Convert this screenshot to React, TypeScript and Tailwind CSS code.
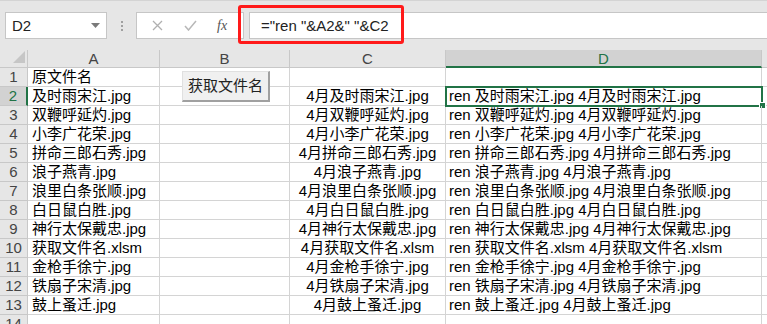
import React from 'react';

const names = [
  '及时雨宋江.jpg',
  '双鞭呼延灼.jpg',
  '小李广花荣.jpg',
  '拼命三郎石秀.jpg',
  '浪子燕青.jpg',
  '浪里白条张顺.jpg',
  '白日鼠白胜.jpg',
  '神行太保戴忠.jpg',
  '获取文件名.xlsm',
  '金枪手徐宁.jpg',
  '铁扇子宋清.jpg',
  '鼓上蚤迁.jpg',
];

const rows = [
  { a: '原文件名', c: '', d: '' },
  ...names.map(n => ({ a: n, c: `4月${n}`, d: `ren ${n} 4月${n}` })),
  { a: '', c: '', d: '' },
];

const font = { fontFamily: '"Liberation Sans", "Noto Sans CJK SC", sans-serif' };

function Toolbar() {
  return (
    <div className="relative flex h-[50px] items-start border-t border-[#d4d4d4] bg-[#e6e6e6] pt-[11px]">
      <div className="ml-[5px] flex h-[27px] w-[102px] items-center justify-between border border-[#c6c6c6] bg-white pl-[6px] pr-[6px]">
        <span className="text-[15px] leading-none text-[#222]">D2</span>
        <svg width="9" height="5" viewBox="0 0 9 5">
          <path d="M0 0h9L4.5 5z" fill="#7a7a7a" />
        </svg>
      </div>
      <div className="ml-[14px] mt-[9px] flex flex-col gap-[2px]">
        <span className="h-[2px] w-[2px] bg-[#a0a0a0]" />
        <span className="h-[2px] w-[2px] bg-[#a0a0a0]" />
        <span className="h-[2px] w-[2px] bg-[#a0a0a0]" />
      </div>
      <div className="ml-[13px] flex h-[27px] w-[108px] items-center border border-[#c6c6c6] bg-white">
        <svg className="ml-[15px]" width="11" height="11" viewBox="0 0 11 11">
          <path d="M1 1l9 9M10 1l-9 9" stroke="#b0b0b0" strokeWidth="1.3" />
        </svg>
        <svg className="ml-[21px]" width="13" height="11" viewBox="0 0 13 11">
          <path d="M1 6l3.5 4L12 1" fill="none" stroke="#b8b8b8" strokeWidth="1.5" />
        </svg>
        <span
          className="ml-[20px] text-[14px] italic leading-none text-[#555]"
          style={{ fontFamily: '"Liberation Serif", serif' }}
        >
          fx
        </span>
      </div>
      <div className="ml-[5px] flex h-[27px] flex-1 items-center border-y border-l border-[#c6c6c6] bg-white pl-[11px]">
        <span className="text-[15px] leading-none text-[#222]">="ren "&amp;A2&amp;" "&amp;C2</span>
      </div>
      <div className="absolute left-[238px] top-[4px] h-[39px] w-[166px] rounded-[3px] border-[3px] border-[#ff1a1a]" />
    </div>
  );
}

export default function App() {
  return (
    <div className="relative h-[324px] w-[767px] overflow-hidden bg-white" style={font}>
      <Toolbar />
      <div className="grid grid-cols-[28px_132px_130px_156px_316px_1fr] text-[15px] leading-[19px] text-black">
        <div className="flex h-[18px] items-end justify-end border-b border-r border-[#c8c8c8] bg-[#e6e6e6] pb-[4px] pr-[2px]">
          <svg width="12" height="12" viewBox="0 0 12 12">
            <path d="M12 0v12H0z" fill="#c6c6c6" />
          </svg>
        </div>
        {['A', 'B', 'C'].map(l => (
          <div key={l} className="flex h-[18px] items-center justify-center border-b border-r border-[#c8c8c8] bg-[#e6e6e6] text-[#444]">
            {l}
          </div>
        ))}
        <div className="flex h-[18px] items-center justify-center border-b-2 border-r border-b-[#217346] border-r-[#c8c8c8] bg-[#d2d2d2] text-[#217346]">
          D
        </div>
        <div className="h-[18px] border-b border-[#c8c8c8] bg-[#e6e6e6]" />

        {rows.map((r, i) => {
          const sel = i === 1;
          return (
            <React.Fragment key={i}>
              <div
                className={
                  sel
                    ? 'flex h-[19px] items-end justify-center border-b border-r-2 border-b-[#c8c8c8] border-r-[#217346] bg-[#d2d2d2] text-[#217346]'
                    : 'flex h-[19px] items-end justify-center border-b border-r border-[#c8c8c8] bg-[#e6e6e6] text-[#444]'
                }
              >
                {i + 1}
              </div>
              <div className="flex h-[19px] items-end whitespace-nowrap border-b border-r border-[#d4d4d4] pl-[4px]">{r.a}</div>
              <div className="h-[19px] border-b border-r border-[#d4d4d4]" />
              <div className="flex h-[19px] items-end justify-center whitespace-nowrap border-b border-r border-[#d4d4d4]">{r.c}</div>
              <div className="relative flex h-[19px] items-end whitespace-nowrap border-b border-r border-[#d4d4d4] pl-[3px]">
                {r.d}
                {sel && (
                  <>
                    <div className="absolute -left-[1px] -top-[1px] bottom-[-2px] right-[-2px] border-2 border-[#217346]" />
                    <div className="absolute bottom-[-4px] right-[-5px] h-[7px] w-[7px] border border-white bg-[#217346]" />
                  </>
                )}
              </div>
              <div className="h-[19px] border-b border-[#d4d4d4]" />
            </React.Fragment>
          );
        })}
      </div>
      <button className="absolute left-[182px] top-[71px] flex h-[31px] w-[88px] items-center justify-center border-l border-t border-b-2 border-r-2 border-l-[#e0e0e0] border-t-[#e0e0e0] border-b-[#a0a0a0] border-r-[#a0a0a0] bg-[#f0f0f0] text-[15px] text-[#222]">
        获取文件名
      </button>
    </div>
  );
}
